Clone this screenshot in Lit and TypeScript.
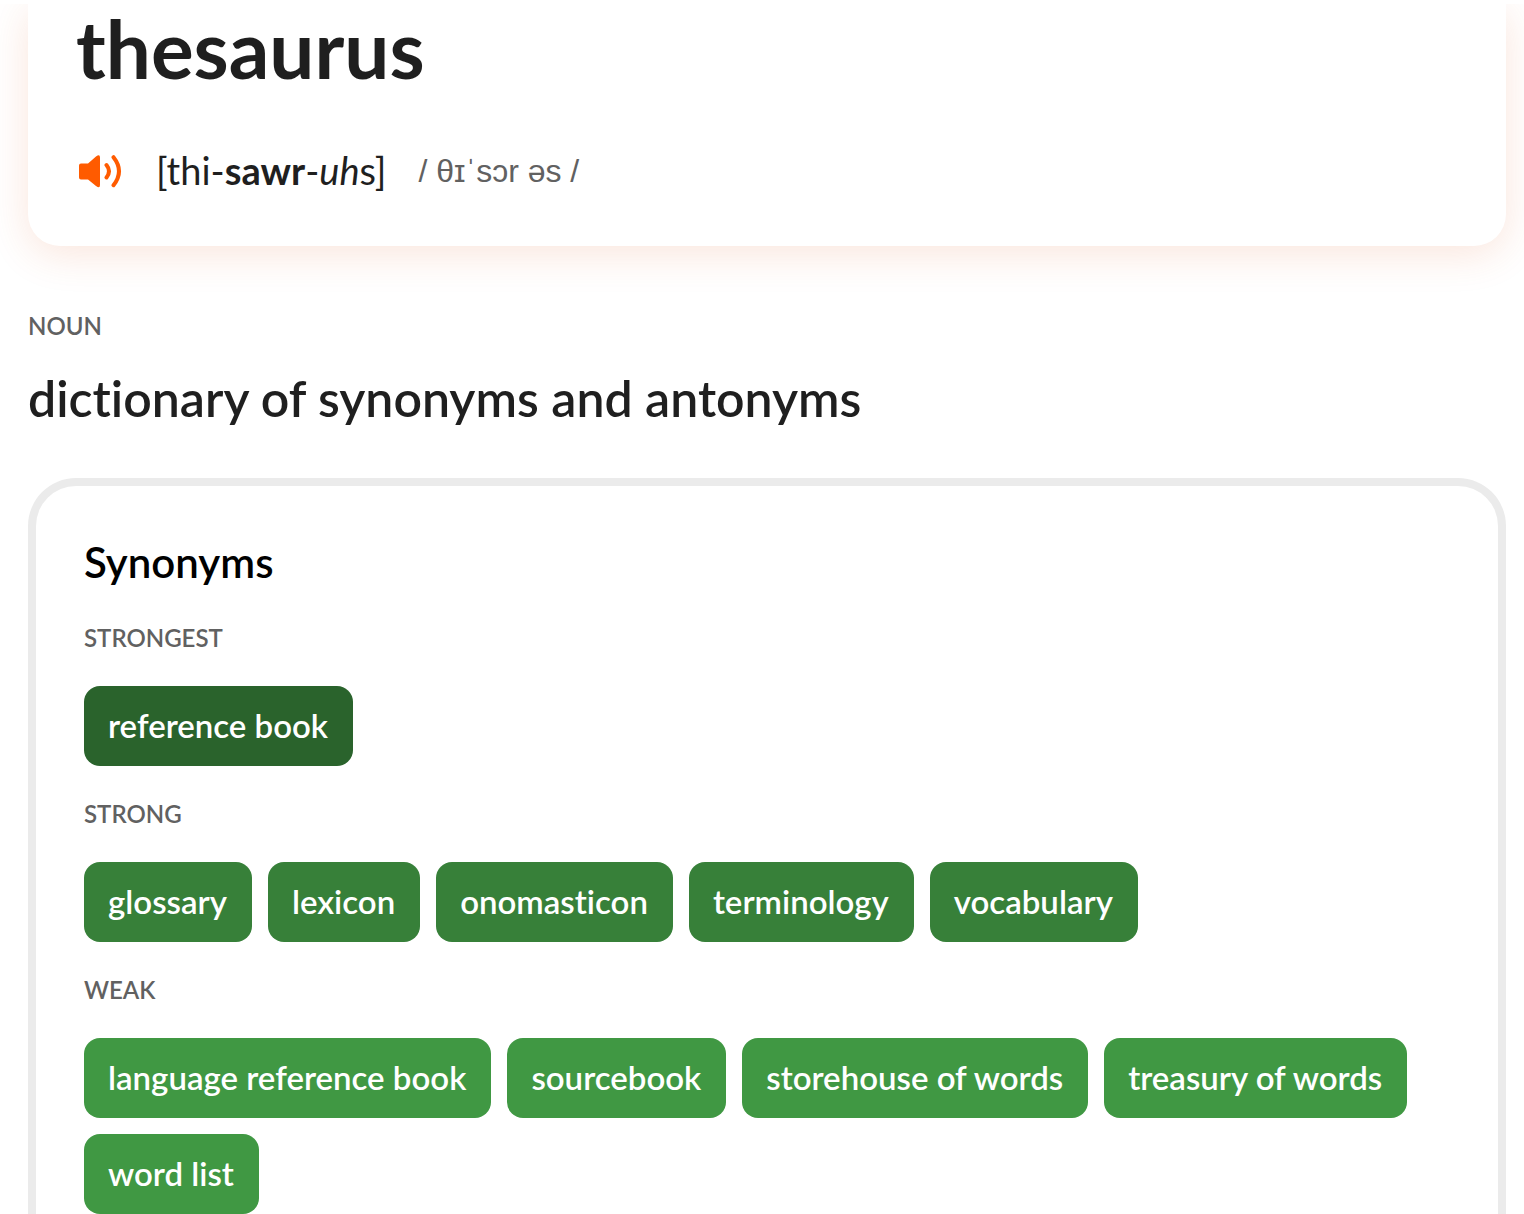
import { LitElement, html, css } from "lit";
import { customElement, property } from "lit/decorators.js";

interface SynonymGroup {
  strength: "strongest" | "strong" | "weak";
  words: string[];
}

const GROUPS: SynonymGroup[] = [
  { strength: "strongest", words: ["reference book"] },
  {
    strength: "strong",
    words: ["glossary", "lexicon", "onomasticon", "terminology", "vocabulary"],
  },
  {
    strength: "weak",
    words: [
      "language reference book",
      "sourcebook",
      "storehouse of words",
      "treasury of words",
      "word list",
    ],
  },
];

@customElement("word-header")
class WordHeader extends LitElement {
  static styles = css`
    :host {
      display: block;
    }
    .card {
      box-sizing: border-box;
      padding: 0 48px 50px;
      border-radius: 0 0 32px 32px;
      background: #fff;
      box-shadow: 0 8px 40px rgba(226, 92, 40, 0.16);
      clip-path: inset(0 -18px -64px -28px);
    }
    .word {
      margin: 0 0 56px;
      font-size: 80px;
      line-height: 88px;
      font-weight: 700;
      color: #1f1f1f;
    }
    .row {
      display: flex;
      align-items: flex-start;
      height: 48px;
      line-height: 44px;
      color: #1f1f1f;
    }
    .listen {
      display: block;
      width: 48px;
      height: 48px;
      margin-right: 32px;
      padding: 0;
      border: 0;
      background: none;
      cursor: pointer;
    }
    .listen svg {
      display: block;
    }
    .respelling {
      margin-right: 32px;
      font-size: 38px;
    }
    .ipa {
      font-family: "Liberation Sans", sans-serif;
      font-size: 32px;
      line-height: 46px;
      color: #616161;
    }
  `;

  render() {
    return html`
      <header class="card">
        <h1 class="word">thesaurus</h1>
        <div class="row">
          <button class="listen" type="button" aria-label="Listen">
            <svg width="48" height="48" viewBox="0 0 48 48" aria-hidden="true">
              <path
                d="M5 15.500h7L20 8.500Q24 5.500 24 9.500v27.500Q24 41 20 38L12 31.500H5q-2 0-2-2V17.500q0-2 2-2z"
                fill="#ff5b00"
              />
              <path
                d="M30.500 17Q35.500 23.200 30.500 29.500M37.500 9.200Q48.500 23.200 37.500 37.200"
                fill="none"
                stroke="#ff5b00"
                stroke-width="4"
                stroke-linecap="round"
              />
            </svg>
          </button>
          <span class="respelling">[thi-<b>sawr</b>-<i>uh</i>s]</span>
          <span class="ipa">/ θɪˈsɔr əs /</span>
        </div>
      </header>
    `;
  }
}

@customElement("synonym-group")
class SynonymGroupView extends LitElement {
  @property({ attribute: false }) group!: SynonymGroup;

  static styles = css`
    :host {
      display: block;
    }
    .label {
      margin: 0 0 32px;
      font-size: 24px;
      line-height: 32px;
      font-weight: 600;
      text-transform: uppercase;
      color: #616161;
    }
    .chips {
      display: flex;
      flex-wrap: wrap;
      gap: 16px;
      margin: 0;
      padding: 0;
      list-style: none;
    }
    .chip {
      display: block;
      padding: 0 25px 2px 24px;
      border-radius: 16px;
      font-size: 33px;
      line-height: 78px;
      font-weight: 600;
      color: #fff;
      text-decoration: none;
    }
    .strongest {
      background: #2a632c;
    }
    .strong {
      background: #378039;
    }
    .weak {
      background: #409843;
    }
  `;

  render() {
    const { strength, words } = this.group;
    return html`
      <p class="label">${strength}</p>
      <ul class="chips">
        ${words.map(
          (w) => html`<li>
            <a class="chip ${strength}" href="#${w.replace(/ /g, "-")}">${w}</a>
          </li>`
        )}
      </ul>
    `;
  }
}

@customElement("app-root")
class AppRoot extends LitElement {
  static styles = css`
    :host {
      display: block;
      overflow: hidden;
      background: #fff;
      font-family: Lato, "Noto Sans", sans-serif;
      font-variant-ligatures: none;
    }
    .page {
      box-sizing: border-box;
      display: flex;
      flex-direction: column;
      min-height: 100vh;
      padding: 4px 18px 0 28px;
    }
    .part {
      margin: 64px 0 28px;
      font-size: 24px;
      line-height: 32px;
      font-weight: 600;
      color: #616161;
    }
    .sense {
      margin: 0 0 52px;
      font-size: 50px;
      line-height: 56px;
      font-weight: 600;
      color: #1f1f1f;
    }
    .panel {
      flex: 1;
      display: flex;
      flex-direction: column;
      gap: 32px;
      padding: 48px 48px 0;
      border: 8px solid #ebebeb;
      border-bottom: 0;
      border-radius: 48px 48px 0 0;
    }
    .title {
      margin: 0;
      font-size: 42px;
      line-height: 56px;
      font-weight: 600;
      color: #000;
    }
  `;

  render() {
    return html`
      <main class="page">
        <word-header></word-header>
        <p class="part">NOUN</p>
        <h2 class="sense">dictionary of synonyms and antonyms</h2>
        <section class="panel">
          <h3 class="title">Synonyms</h3>
          ${GROUPS.map(
            (g) => html`<synonym-group .group=${g}></synonym-group>`
          )}
        </section>
      </main>
    `;
  }
}
